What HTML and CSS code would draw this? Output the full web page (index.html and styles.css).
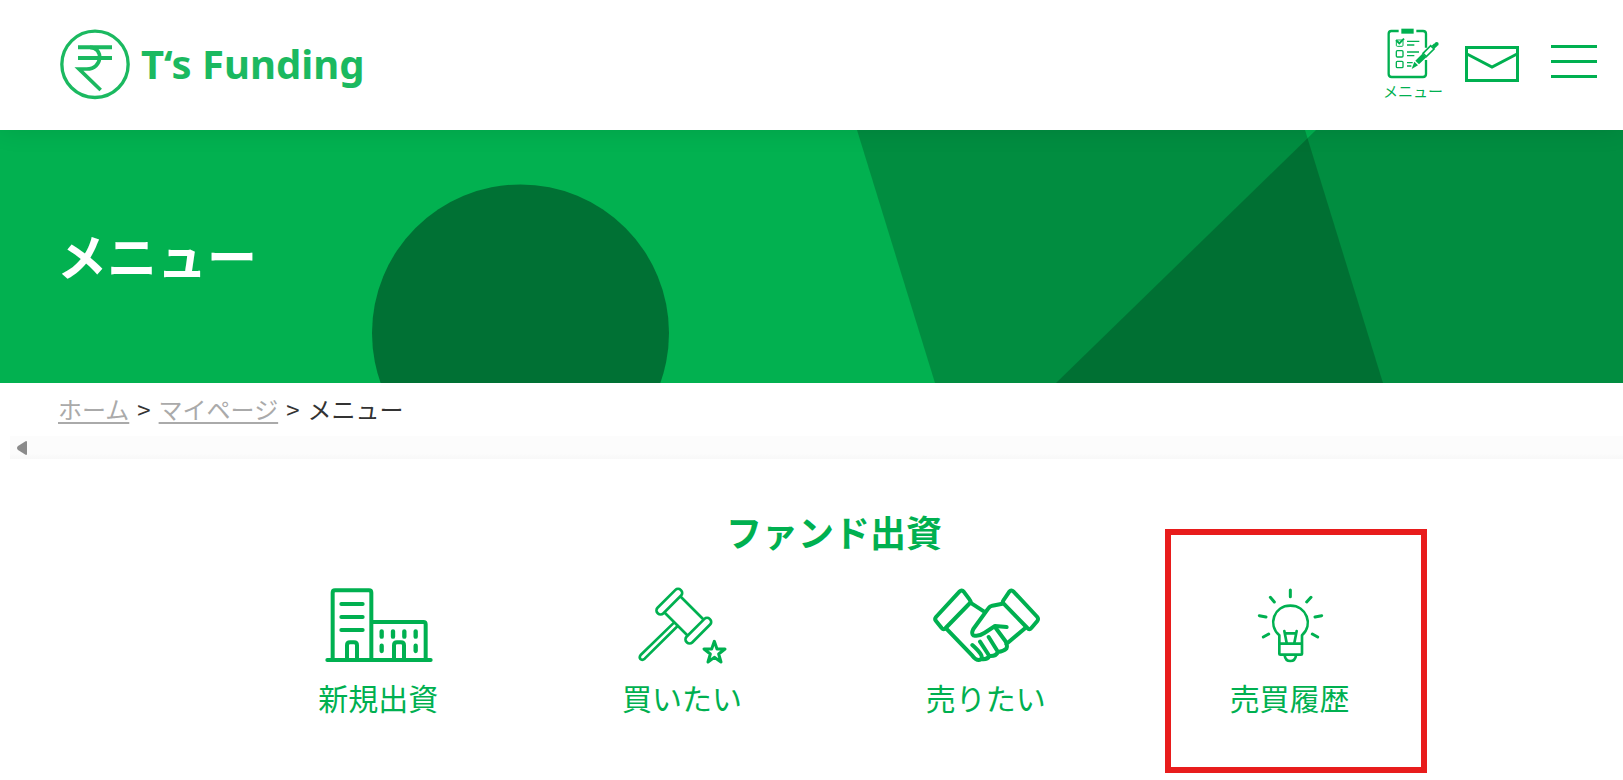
FILE: index.html
```html
<!DOCTYPE html>
<html lang="ja">
<head>
  <meta charset="utf-8">
  <meta name="viewport" content="width=device-width, initial-scale=1.0">
  <title>メニュー | T‘s Funding</title>
  <link rel="stylesheet" href="styles.css">
</head>
<body>
  <header class="header">
    <a class="logo" href="#">
      <svg class="logo-mark" viewBox="57 54 216 216" aria-hidden="true">
        <circle cx="165" cy="163" r="99.500"/>
        <path d="M114 112H216M114 144H216" stroke-width="12"/>
        <path d="M150 112C190 112 190 177 140 177H117L182 240" stroke-width="11"/>
      </svg>
      <span>T‘s Funding</span>
    </a>
    <nav class="header-nav">
      <a class="nav-menu" href="#">
        <svg viewBox="70 48 180 162" aria-hidden="true">
          <path d="M117 60H95Q87 60 87 68V189Q87 198 96 198H190Q199 198 199 189V147M170 60H190Q199 60 199 68V110" stroke-width="7"/>
          <path class="fill" d="M125 53H162V68H125Z"/>
          <rect x="110" y="87" width="20" height="19" rx="3" stroke-width="3"/>
          <rect x="110" y="119" width="20" height="19" rx="3" stroke-width="4"/>
          <rect x="110" y="151" width="20" height="19" rx="3" stroke-width="4"/>
          <path d="M109 87L119 97L133 83" stroke-width="6"/>
          <path d="M142 91H179M142 102H164M142 123H178M142 134H164M142 155H159M142 165H155" stroke-width="4"/>
          <path class="fill" d="M156 174L164 152L175 163Z"/>
          <path class="fill" d="M167 149L188 128L200 139L178 160Z"/>
          <path d="M190 127L213 104L223 114L200 137Z" stroke-width="5"/>
          <path class="fill" d="M216 104L224 97L233 105L224 113Z"/>
          <circle class="fill" cx="231" cy="99" r="6"/>
        </svg>
        <span>メニュー</span>
      </a>
      <a class="nav-mail" href="#" aria-label="お問い合わせ">
        <svg viewBox="0 0 54 36" aria-hidden="true">
          <rect x="1.500" y="1.500" width="51" height="33" stroke-width="3"/>
          <path d="M2 8L27 21L52 8" stroke-width="3"/>
        </svg>
      </a>
      <button class="nav-toggle" type="button" aria-label="ナビゲーションを開く">
        <span></span>
        <span></span>
        <span></span>
      </button>
    </nav>
  </header>

  <div class="hero">
    <svg class="hero-bg" viewBox="0 0 1623 253" preserveAspectRatio="none" aria-hidden="true">
      <circle class="hero-circle" cx="520.500" cy="203" r="148.500"/>
      <path d="M857 0H1305L1383 253H935Z"/>
      <path d="M1316 0H1623V253H1056Z"/>
    </svg>
    <h1>メニュー</h1>
  </div>

  <nav class="breadcrumb">
    <a href="#">ホーム</a>
    <span>&gt;</span>
    <a href="#">マイページ</a>
    <span>&gt;</span>
    <span class="current">メニュー</span>
  </nav>

  <div class="scrollbar">
    <svg viewBox="0 0 12 16" aria-hidden="true"><path d="M10 1L2 6Q0 8 2 10L10 15Q11 15 11 14V2Q11 1 10 1Z"/></svg>
  </div>

  <main class="content">
    <h2>ファンド出資</h2>
    <ul class="menu-list">
      <li>
        <a href="#">
          <svg viewBox="66 48 336 240" stroke-width="12" aria-hidden="true">
            <path d="M82 270H392M98 270V68Q98 61 105 61H207Q214 61 214 68V270M214 156H370Q377 156 377 163V270"/>
            <path d="M124 102H188M124 141H188M124 180H188"/>
            <path d="M141 270V226Q141 217 150 217H162Q171 217 171 226V270M282 270V226Q282 217 291 217H303Q312 217 312 226V270"/>
            <path d="M245 184V200M279 184V200M313 184V200M347 184V200M245 227V243M347 227V243" stroke-width="13"/>
          </svg>
          <span>新規出資</span>
        </a>
      </li>
      <li>
        <a href="#">
          <svg viewBox="78 48 336 240" stroke-width="8" aria-hidden="true">
            <rect x="-49" y="-12" width="98" height="24" rx="11" transform="translate(208 95) rotate(-45)"/>
            <rect x="-49" y="-12" width="98" height="24" rx="11" transform="translate(295 182) rotate(-45)"/>
            <path d="M243 81L309 147M195 129L261 195"/>
            <path d="M222 158L122 255Q117 262 121 267Q127 272 134 266L233 168"/>
            <path d="M343 214L351 237H375L356 252L363 276L343 262L324 276L331 252L312 237H335Z" stroke-width="9"/>
          </svg>
          <span>買いたい</span>
        </a>
      </li>
      <li>
        <a href="#">
          <svg viewBox="60 48 336 240" stroke-width="12" aria-hidden="true">
            <path d="M149 64L78 141Q73 147 78 153L95 174Q101 181 107 174L180 99Q184 95 179 89L161 65Q155 58 149 64Z"/>
            <path d="M310 64L382 141Q386 147 382 153L364 174Q358 181 352 174L281 101Q276 96 281 90L298 65Q304 58 310 64Z"/>
            <path d="M181 98L226 127M277 101L247 107Q239 109 235 115L190 177Q183 191 190 196Q205 201 223 189L255 168L290 171"/>
            <path d="M109 176L187 257Q201 275 213 268Q224 258 187 225M213 267Q232 270 238 258L210 215M238 258Q257 260 264 246L236 201M264 246Q281 244 289 236Q294 227 286 213L255 171M289 222L346 174"/>
          </svg>
          <span>売りたい</span>
        </a>
      </li>
      <li class="is-marked">
        <a href="#">
          <svg viewBox="252 198 336 240" stroke-width="8" aria-hidden="true">
            <path d="M388 402V346C352 314 372 257 421 257S491 314 456 346V402Q456 404 453 404H391Q388 404 388 402ZM388 371H456"/>
            <path d="M403 333L410 369M440 333L433 369M405 340H438M404 406Q406 423 421 423T438 406"/>
            <path d="M421 210V230M361 232L373 246M483 232L470 246M328 287L348 291M515 287L495 291M340 351L356 342M503 351L487 342" stroke-width="9"/>
          </svg>
          <span>売買履歴</span>
        </a>
      </li>
    </ul>
  </main>
</body>
</html>
```

FILE: styles.css
```css
*,
*::after {
  box-sizing: border-box;
}

body {
  margin: 0;
  background-color: #fff;
  color: #333;
  font-family: "Noto Sans CJK JP", sans-serif;
}

a {
  color: #00b050;
  text-decoration: none;
}

svg {
  display: block;
  fill: none;
  stroke: #00b050;
}

svg .fill {
  fill: #00b050;
  stroke: none;
}

/* header */
.header {
  position: relative;
  z-index: 1;
  display: flex;
  justify-content: space-between;
  align-items: center;
  padding: 27px 26px 29px 59px;
  background-color: #fff;
  box-shadow: 0 0 24px rgba(0, 0, 0, 0.1);
}

.logo {
  display: flex;
  align-items: center;
  gap: 10px;
  color: #1bb960;
  font-family: "Noto Sans", sans-serif;
  font-size: 40px;
  font-weight: bold;
  line-height: 72px;
}

.logo-mark {
  width: 72px;
  height: 72px;
  stroke: #1bb960;
  stroke-width: 10;
}

.header-nav {
  display: flex;
  align-items: center;
}

.nav-menu {
  width: 60px;
  margin-right: 22px;
  font-size: 15px;
  line-height: 20px;
}

.nav-mail {
  width: 54px;
  margin-right: 32px;
}

.nav-toggle {
  display: flex;
  flex-direction: column;
  gap: 12px;
  width: 46px;
  padding: 0 0 6px;
  border: none;
  background: none;
  cursor: pointer;
}

.nav-toggle span {
  height: 3px;
  background-color: #00b050;
}

/* page title */
.hero {
  position: relative;
  padding: 86px 57px 91px;
  background-color: #02b150;
}

.hero-bg {
  position: absolute;
  top: 0;
  left: 0;
  width: 100%;
  height: 100%;
  fill: rgba(0, 0, 0, 0.2);
  stroke: none;
}

.hero-circle {
  fill: #007134;
}

.hero h1 {
  position: relative;
  margin: 0;
  color: #fff;
  font-size: 50px;
  line-height: 76px;
}

/* breadcrumb */
.breadcrumb {
  display: flex;
  gap: 8px;
  padding: 8px 58px 9px;
  font-size: 24px;
  line-height: 36px;
}

.breadcrumb a {
  color: #aaa;
  text-decoration: underline;
  text-decoration-thickness: 2px;
  text-underline-offset: 3px;
}

.scrollbar {
  display: flex;
  align-items: center;
  height: 23px;
  margin-left: 10px;
  padding-left: 6px;
  background: linear-gradient(#fcfcfc 75%, #f8f8f8);
}

.scrollbar svg {
  width: 12px;
  height: 16px;
  fill: #8b8b8b;
  stroke: none;
}

/* fund menu */
.content {
  padding: 46px 0 54px 45px;
}

.content h2 {
  margin: 0;
  color: #00b050;
  font-size: 36px;
  line-height: 52px;
  text-align: center;
}

.menu-list {
  display: grid;
  grid-template-columns: repeat(4, 1fr);
  width: 77%;
  margin: 29px auto 0;
  padding: 0;
  list-style: none;
}

.menu-list li {
  position: relative;
}

.menu-list a {
  display: flex;
  flex-direction: column;
  align-items: center;
  gap: 9px;
  font-size: 30px;
  line-height: 44px;
}

.menu-list svg {
  width: 112px;
  height: 80px;
  stroke-linecap: round;
  stroke-linejoin: round;
}

/* red frame round the highlighted item, reaches past its cell */
.is-marked::after {
  content: "";
  position: absolute;
  top: -57px;
  left: 27px;
  width: 262px;
  height: 244px;
  border: 6px solid #e81c1c;
  pointer-events: none;
}
```
